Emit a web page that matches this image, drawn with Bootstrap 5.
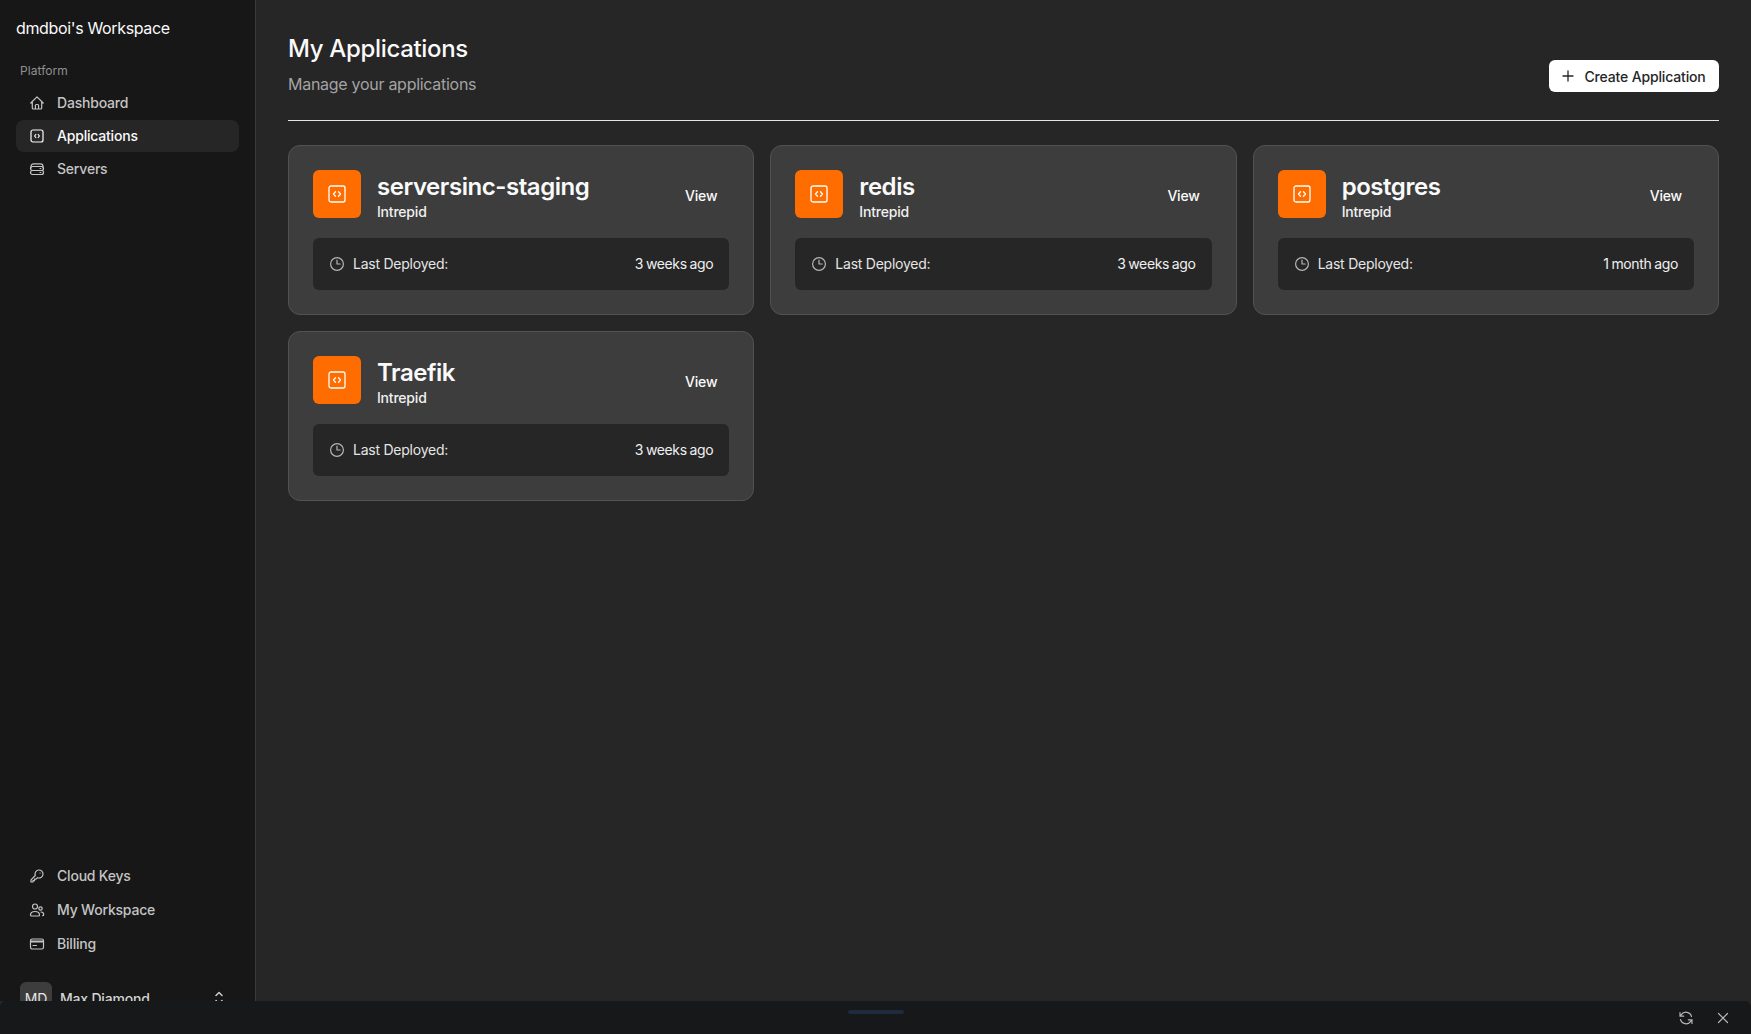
<!doctype html>
<html lang="en">
<head>
<meta charset="utf-8">
<title>My Applications</title>
<link rel="stylesheet" href="https://cdn.jsdelivr.net/npm/bootstrap@5.3.0/dist/css/bootstrap.min.css">
<style>
html,body{height:100%;overflow:hidden}
body{background:#262626;color:#fafafa;font-family:Inter,"Liberation Sans",sans-serif;letter-spacing:-.2px}
.app-frame{height:1034px}
.app-top{height:1001px;min-height:0}
.side{width:256px;flex:none;background:#171717;border-right:1px solid #3a3a3a;overflow:hidden;padding:0 16px}
.side-fill{height:1014px;flex:none}
.ws-name{font-size:16px;line-height:24px;color:#fafafa;margin-top:16px;height:24px;white-space:nowrap;letter-spacing:-.35px}
.plat{font-size:12px;line-height:16px;color:#8f8f8f;margin:23px 0 0 4px;letter-spacing:.05px}
.side-list{display:flex;flex-direction:column;gap:1px;margin-top:8px}
.side-bottom{gap:2px}
.side-link{display:flex;align-items:center;height:32px;padding:0 13px 1px;gap:12px;font-size:14px;font-weight:500;color:#c4c4c4;border-radius:8px;text-decoration:none;width:223px}
.side-link.on{background:#262626;color:#fafafa}
.side-icon{width:16px;height:16px;flex:none}
.side-link svg{stroke:currentColor;fill:none;stroke-width:1.2;stroke-linecap:round;stroke-linejoin:round}
.user-row{height:32px;margin:22px 0 0 4px;gap:8px;width:205px}
.avatar-box{width:32px;height:32px;background:#3d3d3d;border-radius:6px;font-size:14px;color:#e5e5e5;flex:none}
.user-name{font-size:14px;font-weight:500;color:#d4d4d4}
.main-pane{padding:33px 32px 0;min-width:0}
.head-row{height:88px;border-bottom:1px solid #e5e5e5;padding-bottom:16px}
.page-h{font-size:24px;line-height:32px;font-weight:500;margin:0;color:#fafafa;letter-spacing:-.33px}
.page-s{font-size:16px;line-height:24px;color:#a3a3a3;margin:7px 0 0;letter-spacing:-.28px}
.new-btn{height:32px;width:170px;background:#fff;color:#262626;border:0;border-radius:6px;font-size:14px;font-weight:500;padding:0;gap:10px;margin-top:27px;letter-spacing:-.15px}
.new-btn:hover{background:#fff;color:#262626}
.app-grid{display:grid;grid-template-columns:repeat(3,1fr);gap:16px;margin-top:24px}
.app-card{background:#3d3d3d;border:1px solid #525252;border-radius:12px;padding:24px;color:#fafafa;height:170px}
.card-top{height:48px}
.tile{width:48px;height:48px;background:#ff6d00;border-radius:6px;flex:none}
.app-name{font-size:24px;line-height:28px;font-weight:600;margin:3px 0 0;color:#fafafa;white-space:nowrap;letter-spacing:-.45px}
.app-sub{font-size:14px;line-height:20px;font-weight:500;color:#f0f0f0;margin-top:1px}
.view-btn{font-size:14px;font-weight:500;color:#fafafa;border:0;padding:0 12px;height:36px;margin-top:7px}
.view-btn:hover{color:#fff}
.deploy{background:#262626;border-radius:6px;height:52px;padding:0 16px 1px;margin-top:20px;font-size:14px}
.deploy-l{color:#e5e5e5;gap:8px;letter-spacing:-.24px}
.deploy-r{color:#f0f0f0;letter-spacing:-.35px;word-spacing:-.8px}
.dock{height:33px;background:#17181a;border-radius:6px 6px 0 0;padding:0 20px 0 0}
.dock-pill{width:56px;height:4px;background:#1e2b3c;border-radius:2px;margin:9px 0 0 848px}
.dock-ic{margin-top:9px;gap:21px}
.dock svg{stroke:#b5b5b5;fill:none;stroke-width:1.2;stroke-linecap:round;stroke-linejoin:round;width:16px;height:16px}
</style>
</head>
<body>
<div class="app-frame d-flex flex-column">
  <div class="app-top d-flex">
    <aside class="side">
     <div class="side-fill d-flex flex-column">
      <div class="ws-name">dmdboi's Workspace</div>
      <div class="plat">Platform</div>
      <nav class="side-list">
        <a class="side-link" href="#"><svg class="side-icon" viewBox="0 0 16 16"><path d="M1.800 8 8 1.800 14.200 8M3.300 6.800V13a1 1 0 0 0 1 1h7.400a1 1 0 0 0 1-1V6.800M6.400 14v-3.500a1 1 0 0 1 1-1h1.200a1 1 0 0 1 1 1V14"/></svg>Dashboard</a>
        <a class="side-link on" href="#"><svg class="side-icon" viewBox="0 0 16 16"><rect x="2" y="2" width="12" height="12" rx="2"/><path d="M6.800 6.500 5.600 8l1.200 1.500M9.200 6.500 10.400 8 9.200 9.500"/></svg>Applications</a>
        <a class="side-link" href="#"><svg class="side-icon" viewBox="0 0 16 16"><path d="M2 7V5.500C2 4 3 2.800 4.500 2.800h7C13 2.800 14 4 14 5.500V7"/><rect x="1.500" y="5.500" width="13" height="4" rx="2"/><rect x="1.500" y="9.500" width="13" height="4" rx="2"/><path d="M11 7.500h.8M11 11.500h.8"/></svg>Servers</a>
      </nav>
      <div class="flex-grow-1"></div>
      <nav class="side-list side-bottom">
        <a class="side-link" href="#"><svg class="side-icon" viewBox="0 0 16 16"><path d="M6.300 7.500A4 4 0 1 1 8.500 9.700L7 11.200H5.500v1.500H4V14H2v-2.200z"/><path d="M11 5h.1"/></svg>Cloud Keys</a>
        <a class="side-link" href="#"><svg class="side-icon" viewBox="0 0 16 16"><circle cx="6" cy="4.500" r="2.500"/><path d="M1.500 13c0-2.200 2-3.500 4.500-3.500s4.500 1.300 4.500 3.500c0 .6-.4 1-1 1h-7c-.6 0-1-.4-1-1z"/><circle cx="11.500" cy="6.500" r="1.700"/><path d="M12 10c1.500 0 2.700.9 2.700 2.400 0 .8-.4 1.300-1 1.300"/></svg>My Workspace</a>
        <a class="side-link" href="#"><svg class="side-icon" viewBox="0 0 16 16"><rect x="1.500" y="3" width="13" height="10" rx="1.800"/><path d="M1.500 6h13M1.500 5h13M4 9.500h3.500"/></svg>Billing</a>
      </nav>
      <div class="user-row d-flex align-items-center">
        <div class="avatar-box d-flex align-items-center justify-content-center">MD</div>
        <span class="user-name flex-grow-1">Max Diamond</span>
        <svg width="12" height="16" viewBox="0 0 12 16" fill="none" stroke="#d4d4d4" stroke-width="1.400" stroke-linecap="round" stroke-linejoin="round"><path d="M3 5.500 6 2.500l3 3M3 10.500l3 3 3-3"/></svg>
      </div>
     </div>
    </aside>
    <main class="main-pane flex-grow-1">
      <header class="head-row d-flex justify-content-between">
        <div>
          <h1 class="page-h">My Applications</h1>
          <p class="page-s">Manage your applications</p>
        </div>
        <button class="btn new-btn d-flex align-items-center justify-content-center" type="button"><svg width="12" height="12" viewBox="0 0 12 12" fill="none" stroke="#262626" stroke-width="1.300" stroke-linecap="round"><path d="M6 1v10M1 6h10"/></svg>Create Application</button>
      </header>
      <section class="app-grid">
        <article class="app-card">
          <div class="card-top d-flex justify-content-between">
            <div class="d-flex gap-3">
              <div class="tile d-flex align-items-center justify-content-center"><svg width="18" height="18" viewBox="0 0 18 18" fill="none" stroke="#fff" stroke-width="1.300" stroke-linecap="round" stroke-linejoin="round"><rect x="1" y="1" width="16" height="16" rx="2"/><path d="M7.500 6.800 5.500 9l2 2.200M10.500 6.800l2 2.200-2 2.200"/></svg></div>
              <div><h2 class="app-name">serversinc-staging</h2><div class="app-sub">Intrepid</div></div>
            </div>
            <a class="btn view-btn d-flex align-items-center" href="#">View</a>
          </div>
          <div class="deploy d-flex align-items-center justify-content-between">
            <span class="deploy-l d-flex align-items-center"><svg width="16" height="16" viewBox="0 0 16 16" fill="none" stroke="#b5b5b5" stroke-width="1.200" stroke-linecap="round" stroke-linejoin="round"><circle cx="8" cy="8" r="6.400"/><path d="M8 4v4h3.200"/></svg>Last Deployed:</span>
            <span class="deploy-r">3 weeks ago</span>
          </div>
        </article>
        <article class="app-card">
          <div class="card-top d-flex justify-content-between">
            <div class="d-flex gap-3">
              <div class="tile d-flex align-items-center justify-content-center"><svg width="18" height="18" viewBox="0 0 18 18" fill="none" stroke="#fff" stroke-width="1.300" stroke-linecap="round" stroke-linejoin="round"><rect x="1" y="1" width="16" height="16" rx="2"/><path d="M7.500 6.800 5.500 9l2 2.200M10.500 6.800l2 2.200-2 2.200"/></svg></div>
              <div><h2 class="app-name">redis</h2><div class="app-sub">Intrepid</div></div>
            </div>
            <a class="btn view-btn d-flex align-items-center" href="#">View</a>
          </div>
          <div class="deploy d-flex align-items-center justify-content-between">
            <span class="deploy-l d-flex align-items-center"><svg width="16" height="16" viewBox="0 0 16 16" fill="none" stroke="#b5b5b5" stroke-width="1.200" stroke-linecap="round" stroke-linejoin="round"><circle cx="8" cy="8" r="6.400"/><path d="M8 4v4h3.200"/></svg>Last Deployed:</span>
            <span class="deploy-r">3 weeks ago</span>
          </div>
        </article>
        <article class="app-card">
          <div class="card-top d-flex justify-content-between">
            <div class="d-flex gap-3">
              <div class="tile d-flex align-items-center justify-content-center"><svg width="18" height="18" viewBox="0 0 18 18" fill="none" stroke="#fff" stroke-width="1.300" stroke-linecap="round" stroke-linejoin="round"><rect x="1" y="1" width="16" height="16" rx="2"/><path d="M7.500 6.800 5.500 9l2 2.200M10.500 6.800l2 2.200-2 2.200"/></svg></div>
              <div><h2 class="app-name">postgres</h2><div class="app-sub">Intrepid</div></div>
            </div>
            <a class="btn view-btn d-flex align-items-center" href="#">View</a>
          </div>
          <div class="deploy d-flex align-items-center justify-content-between">
            <span class="deploy-l d-flex align-items-center"><svg width="16" height="16" viewBox="0 0 16 16" fill="none" stroke="#b5b5b5" stroke-width="1.200" stroke-linecap="round" stroke-linejoin="round"><circle cx="8" cy="8" r="6.400"/><path d="M8 4v4h3.200"/></svg>Last Deployed:</span>
            <span class="deploy-r">1 month ago</span>
          </div>
        </article>
        <article class="app-card">
          <div class="card-top d-flex justify-content-between">
            <div class="d-flex gap-3">
              <div class="tile d-flex align-items-center justify-content-center"><svg width="18" height="18" viewBox="0 0 18 18" fill="none" stroke="#fff" stroke-width="1.300" stroke-linecap="round" stroke-linejoin="round"><rect x="1" y="1" width="16" height="16" rx="2"/><path d="M7.500 6.800 5.500 9l2 2.200M10.500 6.800l2 2.200-2 2.200"/></svg></div>
              <div><h2 class="app-name">Traefik</h2><div class="app-sub">Intrepid</div></div>
            </div>
            <a class="btn view-btn d-flex align-items-center" href="#">View</a>
          </div>
          <div class="deploy d-flex align-items-center justify-content-between">
            <span class="deploy-l d-flex align-items-center"><svg width="16" height="16" viewBox="0 0 16 16" fill="none" stroke="#b5b5b5" stroke-width="1.200" stroke-linecap="round" stroke-linejoin="round"><circle cx="8" cy="8" r="6.400"/><path d="M8 4v4h3.200"/></svg>Last Deployed:</span>
            <span class="deploy-r">3 weeks ago</span>
          </div>
        </article>
      </section>
    </main>
  </div>
  <footer class="dock d-flex justify-content-between">
    <div class="dock-pill"></div>
    <div class="dock-ic d-flex">
      <svg viewBox="0 0 16 16"><path d="M13.500 6.500A5.700 5.700 0 0 0 3.300 4.700L2 6.200M2 2.500v3.700h3.700M2.500 9.500a5.700 5.700 0 0 0 10.200 1.800L14 9.800M14 13.500V9.800h-3.700"/></svg>
      <svg viewBox="0 0 16 16"><path d="M3.500 3.500l9 9M12.500 3.500l-9 9"/></svg>
    </div>
  </footer>
</div>
<script src="https://cdn.jsdelivr.net/npm/bootstrap@5.3.0/dist/js/bootstrap.bundle.min.js"></script>
</body>
</html>
